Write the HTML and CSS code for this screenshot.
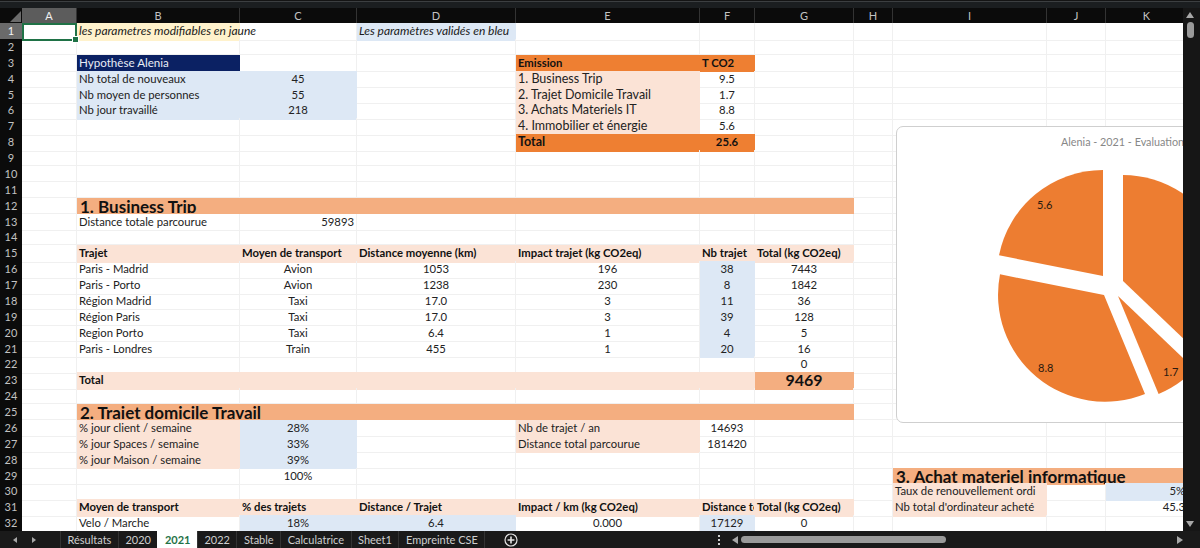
FILE: index.html
```html
<!DOCTYPE html>
<html lang="fr">
<head>
<meta charset="utf-8">
<title>Alenia - 2021</title>
<link rel="stylesheet" href="styles.css">
</head>
<body>
<div class="app">
  <div class="topstrip"></div>
  <div class="main">
    <div class="sheet">
      <div class="row head">
        <div class="corner"><span class="corner-mark"></span></div>
        <div class="ch on">A</div><div class="ch">B</div><div class="ch">C</div><div class="ch">D</div><div class="ch">E</div><div class="ch">F</div><div class="ch">G</div><div class="ch">H</div><div class="ch">I</div><div class="ch">J</div><div class="ch">K</div>
      </div>
      <div class="row"><div class="rh on">1</div><div class="c sel"></div><div class="c note yellow">les parametres modifiables en jaune</div><div class="c"></div><div class="c note blue">Les paramètres validés en bleu</div><div class="c"></div><div class="c"></div><div class="c"></div><div class="c"></div><div class="c"></div><div class="c"></div><div class="c"></div></div>
      <div class="row"><div class="rh">2</div><div class="c"></div><div class="c"></div><div class="c"></div><div class="c"></div><div class="c"></div><div class="c"></div><div class="c"></div><div class="c"></div><div class="c"></div><div class="c"></div><div class="c"></div></div>
      <div class="row"><div class="rh">3</div><div class="c"></div><div class="c navy">Hypothèse Alenia</div><div class="c"></div><div class="c"></div><div class="c orange b">Emission</div><div class="c orange b">T CO2</div><div class="c"></div><div class="c"></div><div class="c"></div><div class="c"></div><div class="c"></div></div>
      <div class="row"><div class="rh">4</div><div class="c"></div><div class="c blue">Nb total de nouveaux</div><div class="c blue m">45</div><div class="c"></div><div class="c peach lg">1. Business Trip</div><div class="c m">9.5</div><div class="c"></div><div class="c"></div><div class="c"></div><div class="c"></div><div class="c"></div></div>
      <div class="row"><div class="rh">5</div><div class="c"></div><div class="c blue">Nb moyen de personnes</div><div class="c blue m">55</div><div class="c"></div><div class="c peach lg">2. Trajet Domicile Travail</div><div class="c m">1.7</div><div class="c"></div><div class="c"></div><div class="c"></div><div class="c"></div><div class="c"></div></div>
      <div class="row"><div class="rh">6</div><div class="c"></div><div class="c blue">Nb jour travaillé</div><div class="c blue m">218</div><div class="c"></div><div class="c peach lg">3. Achats Materiels IT</div><div class="c m">8.8</div><div class="c"></div><div class="c"></div><div class="c"></div><div class="c"></div><div class="c"></div></div>
      <div class="row"><div class="rh">7</div><div class="c"></div><div class="c"></div><div class="c"></div><div class="c"></div><div class="c peach lg">4. Immobilier et énergie</div><div class="c m">5.6</div><div class="c"></div><div class="c"></div><div class="c"></div><div class="c"></div><div class="c"></div></div>
      <div class="row"><div class="rh">8</div><div class="c"></div><div class="c"></div><div class="c"></div><div class="c"></div><div class="c orange b big">Total</div><div class="c orange b m">25.6</div><div class="c"></div><div class="c"></div><div class="c"></div><div class="c"></div><div class="c"></div></div>
      <div class="row"><div class="rh">9</div><div class="c"></div><div class="c"></div><div class="c"></div><div class="c"></div><div class="c"></div><div class="c"></div><div class="c"></div><div class="c"></div><div class="c"></div><div class="c"></div><div class="c"></div></div>
      <div class="row"><div class="rh">10</div><div class="c"></div><div class="c"></div><div class="c"></div><div class="c"></div><div class="c"></div><div class="c"></div><div class="c"></div><div class="c"></div><div class="c"></div><div class="c"></div><div class="c"></div></div>
      <div class="row"><div class="rh">11</div><div class="c"></div><div class="c"></div><div class="c"></div><div class="c"></div><div class="c"></div><div class="c"></div><div class="c"></div><div class="c"></div><div class="c"></div><div class="c"></div><div class="c"></div></div>
      <div class="row"><div class="rh">12</div><div class="c"></div><div class="c section span6">1. Business Trip</div><div class="c"></div><div class="c"></div><div class="c"></div><div class="c"></div></div>
      <div class="row"><div class="rh">13</div><div class="c"></div><div class="c">Distance totale parcourue</div><div class="c r">59893</div><div class="c"></div><div class="c"></div><div class="c"></div><div class="c"></div><div class="c"></div><div class="c"></div><div class="c"></div><div class="c"></div></div>
      <div class="row"><div class="rh">14</div><div class="c"></div><div class="c"></div><div class="c"></div><div class="c"></div><div class="c"></div><div class="c"></div><div class="c"></div><div class="c"></div><div class="c"></div><div class="c"></div><div class="c"></div></div>
      <div class="row"><div class="rh">15</div><div class="c"></div><div class="c peach b">Trajet</div><div class="c peach b">Moyen de transport</div><div class="c peach b">Distance moyenne (km)</div><div class="c peach b">Impact trajet (kg CO2eq)</div><div class="c peach b">Nb trajet</div><div class="c peach b">Total (kg CO2eq)</div><div class="c"></div><div class="c"></div><div class="c"></div><div class="c"></div></div>
      <div class="row"><div class="rh">16</div><div class="c"></div><div class="c">Paris - Madrid</div><div class="c m">Avion</div><div class="c m">1053</div><div class="c m">196</div><div class="c blue m">38</div><div class="c m">7443</div><div class="c"></div><div class="c"></div><div class="c"></div><div class="c"></div></div>
      <div class="row"><div class="rh">17</div><div class="c"></div><div class="c">Paris - Porto</div><div class="c m">Avion</div><div class="c m">1238</div><div class="c m">230</div><div class="c blue m">8</div><div class="c m">1842</div><div class="c"></div><div class="c"></div><div class="c"></div><div class="c"></div></div>
      <div class="row"><div class="rh">18</div><div class="c"></div><div class="c">Région Madrid</div><div class="c m">Taxi</div><div class="c m">17.0</div><div class="c m">3</div><div class="c blue m">11</div><div class="c m">36</div><div class="c"></div><div class="c"></div><div class="c"></div><div class="c"></div></div>
      <div class="row"><div class="rh">19</div><div class="c"></div><div class="c">Région Paris</div><div class="c m">Taxi</div><div class="c m">17.0</div><div class="c m">3</div><div class="c blue m">39</div><div class="c m">128</div><div class="c"></div><div class="c"></div><div class="c"></div><div class="c"></div></div>
      <div class="row"><div class="rh">20</div><div class="c"></div><div class="c">Region Porto</div><div class="c m">Taxi</div><div class="c m">6.4</div><div class="c m">1</div><div class="c blue m">4</div><div class="c m">5</div><div class="c"></div><div class="c"></div><div class="c"></div><div class="c"></div></div>
      <div class="row"><div class="rh">21</div><div class="c"></div><div class="c">Paris - Londres</div><div class="c m">Train</div><div class="c m">455</div><div class="c m">1</div><div class="c blue m">20</div><div class="c m">16</div><div class="c"></div><div class="c"></div><div class="c"></div><div class="c"></div></div>
      <div class="row"><div class="rh">22</div><div class="c"></div><div class="c"></div><div class="c"></div><div class="c"></div><div class="c"></div><div class="c"></div><div class="c m">0</div><div class="c"></div><div class="c"></div><div class="c"></div><div class="c"></div></div>
      <div class="row"><div class="rh">23</div><div class="c"></div><div class="c peach b span5">Total</div><div class="c grand">9469</div><div class="c"></div><div class="c"></div><div class="c"></div><div class="c"></div></div>
      <div class="row"><div class="rh">24</div><div class="c"></div><div class="c"></div><div class="c"></div><div class="c"></div><div class="c"></div><div class="c"></div><div class="c"></div><div class="c"></div><div class="c"></div><div class="c"></div><div class="c"></div></div>
      <div class="row"><div class="rh">25</div><div class="c"></div><div class="c section span6">2. Trajet domicile Travail</div><div class="c"></div><div class="c"></div><div class="c"></div><div class="c"></div></div>
      <div class="row"><div class="rh">26</div><div class="c"></div><div class="c peach">% jour client / semaine</div><div class="c blue m">28%</div><div class="c"></div><div class="c peach">Nb de trajet / an</div><div class="c m">14693</div><div class="c"></div><div class="c"></div><div class="c"></div><div class="c"></div><div class="c"></div></div>
      <div class="row"><div class="rh">27</div><div class="c"></div><div class="c peach">% jour Spaces / semaine</div><div class="c blue m">33%</div><div class="c"></div><div class="c peach">Distance total parcourue</div><div class="c m">181420</div><div class="c"></div><div class="c"></div><div class="c"></div><div class="c"></div><div class="c"></div></div>
      <div class="row"><div class="rh">28</div><div class="c"></div><div class="c peach">% jour Maison / semaine</div><div class="c blue m">39%</div><div class="c"></div><div class="c"></div><div class="c"></div><div class="c"></div><div class="c"></div><div class="c"></div><div class="c"></div><div class="c"></div></div>
      <div class="row"><div class="rh">29</div><div class="c"></div><div class="c"></div><div class="c m">100%</div><div class="c"></div><div class="c"></div><div class="c"></div><div class="c"></div><div class="c"></div><div class="c section span3">3. Achat materiel informatique</div></div>
      <div class="row"><div class="rh">30</div><div class="c"></div><div class="c"></div><div class="c"></div><div class="c"></div><div class="c"></div><div class="c"></div><div class="c"></div><div class="c"></div><div class="c peach">Taux de renouvellement ordi</div><div class="c"></div><div class="c blue r">5%</div></div>
      <div class="row"><div class="rh">31</div><div class="c"></div><div class="c peach b">Moyen de transport</div><div class="c peach b">% des trajets</div><div class="c peach b">Distance / Trajet</div><div class="c peach b">Impact / km (kg CO2eq)</div><div class="c peach b clip">Distance total</div><div class="c peach b">Total (kg CO2eq)</div><div class="c"></div><div class="c peach">Nb total d'ordinateur acheté</div><div class="c"></div><div class="c r">45.3</div></div>
      <div class="row"><div class="rh">32</div><div class="c"></div><div class="c">Velo / Marche</div><div class="c blue m">18%</div><div class="c blue m">6.4</div><div class="c m">0.000</div><div class="c blue m">17129</div><div class="c m">0</div><div class="c"></div><div class="c"></div><div class="c"></div><div class="c"></div></div>

      <div class="chart">
        <svg class="pie" viewBox="897 127 398 295" width="398" height="295" aria-label="Alenia - 2021">
          <text class="pie-title" x="1061" y="146">Alenia - 2021 - Evaluation impact CO2</text>
          <path class="slice" d="M1103 276 L1103 170 A106 106 0 0 0 999 255.3 Z"/>
          <path class="slice" d="M1104 295 L1000 274.3 A107 107 0 0 0 1145 394 Z"/>
          <path class="slice" d="M1118 296 L1194.7 369.1 A106 106 0 0 1 1158.6 393.9 Z"/>
          <path class="slice" d="M1123 281 L1123 175 A106 106 0 0 1 1199.7 354.1 Z"/>
          <text class="pie-label" x="1037" y="209">5.6</text>
          <text class="pie-label" x="1038" y="372">8.8</text>
          <text class="pie-label" x="1163" y="376">1.7</text>
        </svg>
      </div>
    </div>
    <div class="vscroll">
      <span class="tri up"></span>
      <span class="vthumb"></span>
      <span class="vspace"></span>
      <span class="tri down"></span>
    </div>
  </div>
  <div class="bottom">
    <div class="nav"><span class="tri left small"></span><span class="tri right small"></span></div>
    <div class="tabs">
      <div class="tab">Résultats</div>
      <div class="tab">2020</div>
      <div class="tab active">2021</div>
      <div class="tab">2022</div>
      <div class="tab">Stable</div>
      <div class="tab">Calculatrice</div>
      <div class="tab">Sheet1</div>
      <div class="tab">Empreinte CSE</div>
    </div>
    <svg class="plus" viewBox="0 0 14 14" width="14" height="14"><circle cx="7" cy="7" r="6" fill="none" stroke="#e4e4e4" stroke-width="1.2"/><path d="M7 3.6V10.4M3.6 7H10.4" stroke="#e4e4e4" stroke-width="1.6"/></svg>
    <div class="hbar">
      <span class="dots"><i></i><i></i><i></i></span>
      <span class="tri left"></span>
      <span class="htrack"><span class="hthumb"></span></span>
      <span class="tri right"></span>
    </div>
  </div>
</div>
</body>
</html>
```

FILE: styles.css
```css
* { box-sizing: border-box; }
html, body { margin: 0; height: 100%; }
body {
  background: #161616;
  font-family: Lato, "Liberation Sans", sans-serif;
  overflow: hidden;
}
.app { width: 1200px; height: 548px; display: flex; flex-direction: column; }
.topstrip { height: 8px; background: #1b1e20; border-top: 1px solid #141414; box-shadow: inset 0 1px 0 #3c3f41; }
.main { height: 523px; display: flex; }
.sheet {
  position: relative;
  width: 1183px;
  height: 523px;
  overflow: hidden;
  background: #fff;
}
.row {
  display: grid;
  grid-template-columns: 22px 55px 163px 117px 159px 184px 55px 99px 39px 154px 59px 82px;
  height: 15.875px;
}
.head { height: 15px; background: #0b0b0b; }
.corner { display: flex; align-items: flex-end; justify-content: flex-end; padding: 0 1px 1px 0; }
.corner-mark {
  width: 0; height: 0;
  border-left: 11px solid transparent;
  border-bottom: 11px solid #6b6b6b;
}
.ch {
  color: #c2c2c2;
  font-size: 11px;
  line-height: 15px;
  text-align: center;
  border-right: 1px solid #333;
}
.ch.on { background: #5c5c5c; color: #f0f0f0; }
.rh {
  background: #0b0b0b;
  color: #c2c2c2;
  font-size: 11px;
  line-height: 15.875px;
  text-align: center;
}
.rh.on { background: #6a6a6a; color: #f4f4f4; }
.c {
  min-width: 0;
  padding: 0 2px;
  font-size: 11.3px;
  line-height: 16.5px;
  color: #222;
  white-space: nowrap;
  border-right: 1px solid #f0f0f0;
  border-bottom: 1px solid #f0f0f0;
}
.m { text-align: center; }
.r { text-align: right; }
.b { font-weight: 700; color: #111; }
.big { font-size: 12.5px; }
.lg { font-size: 12.5px; }
.clip { overflow: hidden; }
.note { font-style: italic; color: #1a1a1a; font-size: 12px; }
.yellow { background: #fff2cc; border-color: transparent; }
.blue { background: #dde8f5; border-color: transparent; }
.peach { background: #fbe3d6; border-color: transparent; }
.orange { background: #ee7f32; border-color: transparent; }
.navy { background: #0b2163; color: #e8ecf5; border-color: transparent; font-size: 11.6px; }
.section {
  background: #f4ae80;
  border-color: transparent;
  color: #111;
  font-size: 17px;
  font-weight: 700;
  line-height: 18px;
  overflow: hidden;
  padding-left: 3px;
}
.span6 { grid-column: span 6; }
.span5 { grid-column: span 5; }
.span3 { grid-column: span 3; }
.grand {
  background: #f4ae80;
  border-color: transparent;
  color: #111;
  font-size: 16px;
  font-weight: 700;
  line-height: 16.5px;
  text-align: center;
}
.sel { position: relative; border: 2px solid #1f7246; }
.sel::after {
  content: "";
  position: absolute;
  right: -4px;
  bottom: -4px;
  width: 5px;
  height: 5px;
  background: #1f7246;
  border: 1px solid #fff;
}
.chart {
  position: absolute;
  left: 896px;
  top: 118px;
  width: 400px;
  height: 297px;
  background: #fff;
  border: 1px solid #cfcfcf;
  border-radius: 7px;
}
.pie { display: block; }
.slice { fill: #ed7d31; }
.pie-title { font-size: 10.8px; fill: #878787; }
.pie-label { font-size: 11px; fill: #2a1a10; }

.vscroll {
  width: 17px;
  height: 523px;
  background: #161616;
  display: flex;
  flex-direction: column;
  align-items: center;
  padding: 4px 3px 4px 0;
}
.vthumb { width: 7px; height: 16px; margin-top: 4px; border-radius: 4px; background: #9a9a9a; }
.vspace { flex: 1; }
.tri { display: block; width: 0; height: 0; }
.up { border-left: 4px solid transparent; border-right: 4px solid transparent; border-bottom: 6px solid #a8a8a8; }
.down { border-left: 4px solid transparent; border-right: 4px solid transparent; border-top: 6px solid #a8a8a8; }
.left { border-top: 4px solid transparent; border-bottom: 4px solid transparent; border-right: 6px solid #a8a8a8; }
.right { border-top: 4px solid transparent; border-bottom: 4px solid transparent; border-left: 6px solid #a8a8a8; }
.left.small { border-top-width: 3px; border-bottom-width: 3px; border-right-width: 4px; }
.right.small { border-top-width: 3px; border-bottom-width: 3px; border-left-width: 4px; }

.bottom { height: 17px; display: flex; align-items: stretch; background: #1a1a1a; }
.nav { width: 60px; display: flex; align-items: center; padding-left: 13px; gap: 15px; }
.tabs { display: flex; height: 17px; }
.tab {
  padding: 0 6.5px;
  font-size: 11px;
  line-height: 17px;
  color: #cfcfcf;
  white-space: nowrap;
  border-left: 1px solid #333;
}
.tab:last-child { border-right: 1px solid #333; }
.tab.active { background: #fff; color: #1f7246; font-weight: 700; border-color: #fff; }
.plus { align-self: center; margin-left: 19px; }
.hbar {
  margin-left: auto;
  width: 471px;
  margin-right: 17px;
  display: flex;
  align-items: center;
}
.dots { width: 14px; display: flex; flex-direction: column; align-items: center; gap: 2px; margin-right: 6px; }
.dots i { display: block; width: 2px; height: 2px; background: #d0d0d0; }
.htrack { flex: 1; margin: 0 4px 0 3px; }
.hthumb { display: block; width: 205px; height: 7px; border-radius: 4px; background: #9a9a9a; }
```
